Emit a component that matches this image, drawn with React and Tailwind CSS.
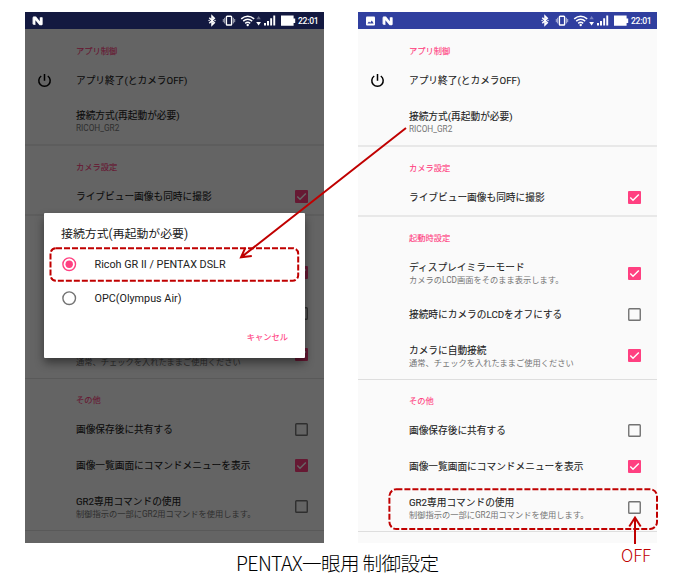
import React from "react";
import clsx from "clsx";

const JP = "font-[Roboto,'Noto_Sans_CJK_JP',sans-serif]";

function NougatIcon({ className }) {
  return (
    <svg className={className} width="12" height="10" viewBox="0 0 12 10">
      <path d="M0.4 1.4 2.4 0.6V9L0.4 8Z" fill="#fff" opacity="0.7" />
      <path d="M8.8 1 11 1.6V9L8.8 8Z" fill="#fff" opacity="0.65" />
      <path d="M1.2 0.6H4L7.8 5.2V1.2L10 1.6V9.2H7.6L3.4 4.2V9L1.2 8.4Z" fill="#fff" />
    </svg>
  );
}

function StatusIcons() {
  return (
    <svg width="88" height="17" viewBox="0 0 88 17" fill="none">
      {/* bluetooth */}
      <path d="M1.3 5.7 6.3 10.8 4 13V4L6.3 6.2 1.3 11.3" stroke="#fff" strokeWidth="1.5" />
      <circle cx="1.1" cy="8.5" r=".7" fill="#fff" />
      <circle cx="7" cy="8.5" r=".7" fill="#fff" />
      {/* vibrate */}
      <rect x="18.4" y="4.2" width="5.2" height="8.8" rx=".8" stroke="#fff" strokeWidth="1.4" />
      <path d="M16.6 5.8V11.4M25.4 5.8V11.4M15.3 7V10.2M26.7 7V10.2" stroke="#fff" opacity=".6" />
      {/* wifi */}
      <path d="M33.2 6.8Q39.7 1.6 46.2 6.8M35.2 9.1Q39.7 5.5 44.2 9.1M37.2 11.3Q39.7 9.3 42.2 11.3" stroke="#fff" strokeWidth="1.5" />
      <circle cx="39.7" cy="13" r="1.2" fill="#fff" />
      <path d="M48.4 7.2 50.6 4 52.8 7.2Z" fill="#fff" opacity=".35" />
      <path d="M48.2 10H53L50.6 13.6Z" fill="#fff" />
      {/* signal */}
      <path d="M56 11h2v2.6h-2zM59 9h2v4.6h-2zM62.2 6.2h1.9v7.4h-1.9zM65.3 3.6h1.9v10h-1.9z" fill="#fff" />
      {/* battery */}
      <path d="M73 3.6H85.6V6.6H87.2V11H85.6V13.8H73Z" fill="#fff" />
    </svg>
  );
}

function StatusBar({ dimmed }) {
  return (
    <div
      className={clsx(
        "flex h-[17px] items-center pr-[6px] pl-[7px] text-white",
        dimmed ? "bg-[#131940]" : "bg-[#303f9f]"
      )}
    >
      {!dimmed && (
        <svg className="mr-[7px] ml-px" width="9" height="10" viewBox="0 0 9 10">
          <rect y=".5" width="9" height="9" rx="1" fill="#fff" />
          <path d="M1.4 7.6 3 5.4 4.2 6.7 5.8 4.6 7.7 7.6Z" fill="#303f9f" />
        </svg>
      )}
      <NougatIcon />
      <div className="ml-auto flex items-center">
        <StatusIcons />
        <span className="ml-[2px] w-[20px] pt-px text-[8.6px] leading-[16px] font-medium tracking-[-0.3px] whitespace-nowrap">22:01</span>
      </div>
    </div>
  );
}

function Category({ children, first }) {
  return (
    <div
      className={clsx(
        "flex h-[23px] items-center pl-[51px] text-[8.25px] text-[#ff4081] [-webkit-text-stroke:0.1px_#ff4081]",
        first ? "mt-[11px]" : "mt-[10px]"
      )}
    >
      {children}
    </div>
  );
}

function Check({ on }) {
  return (
    <svg width="13" height="13" viewBox="0 0 13 13" fill="none">
      {on ? (
        <>
          <rect width="13" height="13" rx="1" fill="#ff4081" />
          <path d="M2.3 6.6 5 9.3 10.8 3.4" stroke="#fff" strokeWidth="1.4" />
        </>
      ) : (
        <rect x=".75" y=".75" width="11.5" height="11.5" rx=".8" stroke="#737373" strokeWidth="1.4" />
      )}
    </svg>
  );
}

function Row({ title, sub, height, icon, checked }) {
  return (
    <div className={clsx("flex items-center pr-4", height)}>
      <div className="flex w-[51px] shrink-0 pl-[12px]">{icon}</div>
      <div className={clsx("grow whitespace-nowrap", sub && "pt-px")}>
        <div className="text-[9.7px] leading-[13px] text-[#212121] [-webkit-text-stroke:0.08px_#212121]">{title}</div>
        {sub && <div className="text-[8.25px] leading-[12px] text-[#757575]">{sub}</div>}
      </div>
      {checked !== undefined && <Check on={checked} />}
    </div>
  );
}

const Power = () => (
  <svg width="15" height="15" viewBox="0 0 15 15" fill="none" stroke="#000" strokeWidth="1.5">
    <path d="M7.5 1V7.8M4.2 3A5.7 5.7 0 1 0 10.8 3" />
  </svg>
);

function Settings({ dimmed }) {
  return (
    <>
      <Category first>アプリ制御</Category>
      <Row height="h-[35px]" title="アプリ終了(とカメラOFF)" icon={<Power />} />
      <Row height={dimmed ? "h-[46px]" : "h-[47px]"} title="接続方式(再起動が必要)" sub="RICOH_GR2" />
      <div className="h-[2px] bg-[#e8e8e8]" />
      <Category>カメラ設定</Category>
      <Row height="h-[35px]" title="ライブビュー画像も同時に撮影" checked />
      <div className="h-[2px] bg-[#e8e8e8]" />
      <Category>起動時設定</Category>
      <Row height="h-[46px]" title="ディスプレイミラーモード" sub="カメラのLCD画面をそのまま表示します。" checked />
      <Row height="h-[36px]" title="接続時にカメラのLCDをオフにする" checked={false} />
      <Row height="h-[47px]" title="カメラに自動接続" sub="通常、チェックを入れたままご使用ください" checked />
      <div className="h-px bg-[#dedede]" />
      <Category>その他</Category>
      <Row height="h-[35px]" title="画像保存後に共有する" checked={false} />
      <Row height="h-[36px]" title="画像一覧画面にコマンドメニューを表示" checked />
      <Row height="h-[47px]" title="GR2専用コマンドの使用" sub="制御指示の一部にGR2用コマンドを使用します。" checked={false} />
      <div className="h-px bg-[#dedede]" />
    </>
  );
}

function Option({ label, selected }) {
  return (
    <div className="flex h-[34px] items-center pl-[18px]">
      <svg width="15" height="15" viewBox="0 0 15 15" fill="none">
        <circle cx="7.2" cy="7.2" r="6.3" stroke={selected ? "#ff4081" : "#737373"} strokeWidth="1.4" />
        {selected && <circle cx="7.2" cy="7.2" r="3.7" fill="#ff4081" />}
      </svg>
      <span className="ml-[17.5px] pt-[2px] text-[10.8px] leading-[14px] text-[#212121]">{label}</span>
    </div>
  );
}

function Dialog() {
  return (
    <div className="absolute top-[201px] left-[19px] h-[145px] w-[261px] rounded-[1px] bg-white pt-[12px] shadow-[0_5px_10px_0px_rgba(0,0,0,0.45)]">
      <div className="h-[22px] pl-[17px] text-[11.9px] leading-[19px] text-[#212121]">接続方式(再起動が必要)</div>
      <Option label="Ricoh GR II / PENTAX DSLR" selected />
      <Option label="OPC(Olympus Air)" />
      <div className="mt-[13px] pr-[17px] text-right text-[8.25px] leading-[18px] text-[#ff4081] [-webkit-text-stroke:0.1px_#ff4081]">キャンセル</div>
    </div>
  );
}

function Phone({ dimmed }) {
  return (
    <div className={clsx("relative h-[531px] w-[299px] bg-[#fafafa]", JP)}>
      <StatusBar dimmed={dimmed} />
      <Settings dimmed={dimmed} />
      {dimmed && (
        <>
          <div className="absolute inset-x-0 top-[17px] bottom-0 bg-black/60" />
          <Dialog />
        </>
      )}
    </div>
  );
}

function Annotations() {
  return (
    <svg className="absolute inset-0" width="682" height="587" viewBox="0 0 682 587" fill="none" stroke="#c00000" strokeWidth="2">
      <rect x="50.5" y="248.2" width="247.7" height="32.6" rx="5.5" strokeDasharray="6 2" />
      <rect x="389.4" y="489.2" width="267.6" height="39.8" rx="7" strokeDasharray="6 2" />
      <path d="M406 128 241.5 257M245.3 247.8 241 257.3 251.8 256" />
      <path d="M635 544V518M629.3 526.5 635 517.5 640.7 526.5" />
    </svg>
  );
}

export default function App() {
  return (
    <div className="relative h-[587px] w-[682px] overflow-hidden bg-white pt-3">
      <div className="flex gap-[34px] pl-[25px]">
        <Phone dimmed />
        <Phone />
      </div>
      <div className="flex font-['Noto_Sans_CJK_JP',sans-serif] font-light whitespace-nowrap">
        <div className="mt-[6px] ml-[236px] w-[385px] text-[19.6px] leading-[28px] tracking-[-0.65px] text-black">PENTAX一眼用 制御設定</div>
        <div className="mt-px text-[16.8px] leading-[22px] text-[#c00000]">OFF</div>
      </div>
      <Annotations />
    </div>
  );
}
